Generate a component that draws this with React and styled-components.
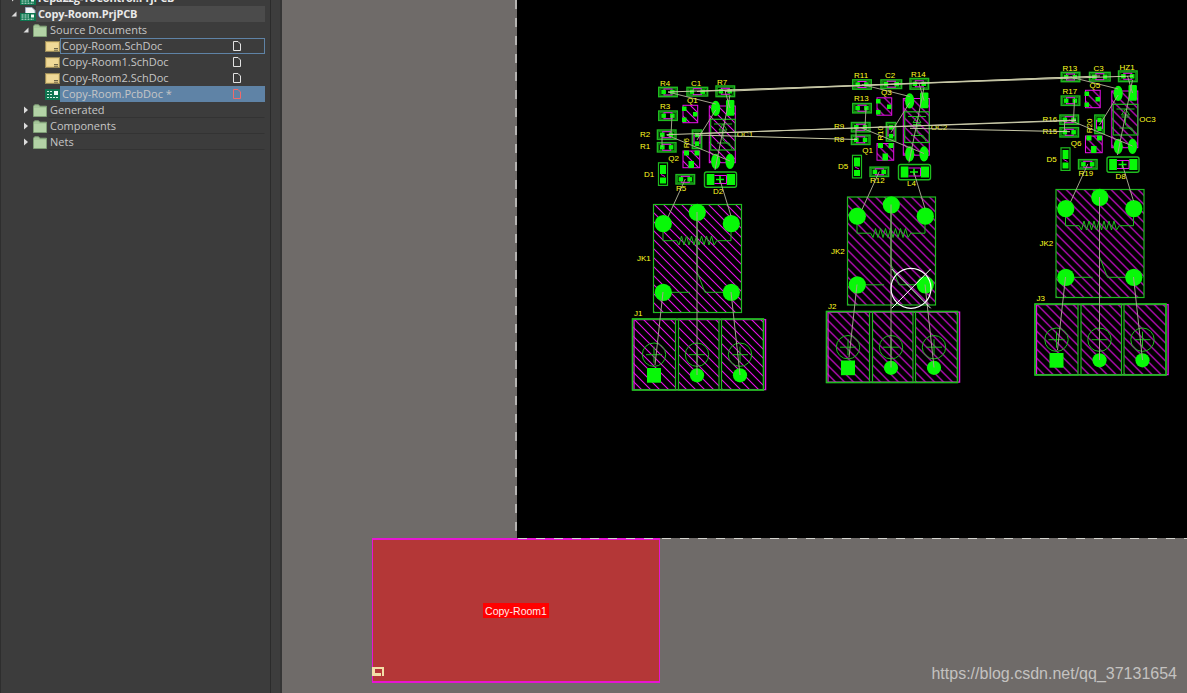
import React from "react";
import styled, { createGlobalStyle } from "styled-components";

const GREEN = "#08f808";
const SILK = "#1fbb1f";
const MAGENTA = "#e810e8";
const RATS = "#a3a38c";

const channels = [
  { id: "a", dx: 0, dy: 0, refs: ["R4", "C1", "R7", "Q1", "R3", "R2", "R1", "R6", "Q2", "D1", "R5", "D2", "OC1", "JK1", "J1"] },
  { id: "b", dx: 194, dy: -7.5, refs: ["R11", "C2", "R14", "Q3", "R13", "R9", "R8", "R10", "Q1", "D5", "R12", "L4", "OC2", "JK2", "J2"] },
  { id: "c", dx: 402.5, dy: -15, refs: ["R13", "C3", "HZ1", "Q5", "R17", "R16", "R15", "R20", "Q6", "D5", "R19", "D8", "OC3", "JK2", "J3"] },
];

const labelSlots = [
  [660, 85.7], [691, 85.7], [717, 84.7], [687, 102.7], [660, 108.7], [640, 136.7], [640, 149],
  null, [668.3, 160.7], [644, 176.7], [676, 190.7], [713, 193.7], [736.7, 137.3], [637, 261], [634, 316],
];

const localRats = [
  [668, 92, 715.7, 104], [715.7, 110, 697, 140], [725, 91, 730, 108], [730, 95, 715, 170],
  [720, 180, 731, 216], [666.7, 135, 730, 161], [672, 115, 671, 135], [662, 135, 662, 147],
  [685.3, 179, 668, 217], [663, 292, 655, 365], [697, 212, 697, 375], [731, 292, 740, 375],
];

const longRats = [
  [668, 92, 1133, 76], [725, 91.3, 1072, 77], [697, 91.5, 1100, 76], [666.7, 134.7, 1076, 120],
  [700, 133.5, 1076, 120.5], [695.7, 135, 857, 139.5], [910, 128.3, 1070, 131.7],
];

const GlobalStyle = createGlobalStyle`
  html, body {
    margin: 0;
    height: 100%;
    overflow: hidden;
    background: #6f6b69;
  }
`;

const Page = styled.div`
  width: 1187px;
  height: 693px;
  display: flex;
  overflow: hidden;
`;

const Sidebar = styled.aside`
  width: 269px;
  flex: none;
  box-sizing: content-box;
  background: #3c3c3c;
  border-left: 1px solid #2e2e2e;
  border-right: 1px solid #2b2b2b;
  padding-right: 0;
  overflow: hidden;
`;

const Gutter = styled.div`
  width: 11px;
  flex: none;
  background: #3d3d3d;
  border-right: 2px solid #353535;
  box-sizing: border-box;
`;

const Tree = styled.ul`
  list-style: none;
  margin: -10px 5px 0 -1px;
  padding: 0;
  font-family: "Open Sans", "Noto Sans", sans-serif;
  font-size: 11px;
  color: #c6c6c6;
`;

const Row = styled.li`
  height: 16px;
  display: flex;
  align-items: stretch;
  padding-left: ${(p) => p.$indent}px;
`;

const Toggle = styled.span`
  width: 12px;
  flex: none;
  display: flex;
  align-items: center;
  justify-content: center;
  color: #d8d8d8;
`;

const IconSlot = styled.span`
  width: 16px;
  flex: none;
  display: flex;
  align-items: center;
  justify-content: center;
`;

const Label = styled.span`
  flex: 1;
  min-width: 0;
  display: flex;
  align-items: center;
  justify-content: space-between;
  box-sizing: border-box;
  padding: 0 23px 0 1px;
  line-height: 14px;
  white-space: pre;
  letter-spacing: ${(p) => (p.$bold ? "-0.17px" : "0")};
  color: ${(p) => (p.$bold ? "#e9e9e9" : "#c6c6c6")};
  font-weight: ${(p) => (p.$bold ? 700 : 400)};
  background: ${(p) => (p.$tone === "selected" ? "#5f83a6" : p.$tone === "project" ? "#4b4b4b" : "transparent")};
  border: 1px solid ${(p) => (p.$tone === "focus" ? "#5f83a6" : "transparent")};
  border-bottom-color: ${(p) => (p.$tone === "folder" ? "#333333" : p.$tone === "focus" ? "#5f83a6" : "transparent")};
`;

const StatusDot = styled.span`
  width: 7px;
  height: 7px;
  margin: -8px -13px 0 0;
  border-radius: 50%;
  background: #f0666a;
`;

const Canvas = styled.main`
  position: relative;
  flex: 1;
  background: #6f6b69;
  overflow: hidden;
`;

const Board = styled.section`
  position: absolute;
  left: 235px;
  right: 0;
  top: 0;
  height: 538px;
  background: #000;
  z-index: 2;

  &::before {
    content: "";
    position: absolute;
    left: -2px;
    top: 0;
    bottom: 0;
    width: 2px;
    background: repeating-linear-gradient(180deg, #b5b3b1 0 9px, transparent 9px 18px);
  }

  &::after {
    content: "";
    position: absolute;
    left: 1px;
    right: 0;
    bottom: -1px;
    height: 1px;
    background: repeating-linear-gradient(90deg, #d2d2cd 0 9px, transparent 9px 18px);
  }
`;

const BoardArt = styled.svg`
  display: block;
  width: 100%;
  height: 100%;
`;

const Ref = styled.text`
  fill: #ffff20;
  font-family: "Liberation Sans", sans-serif;
  font-size: 8px;
`;

const Sheet = styled.div`
  position: absolute;
  left: 90px;
  top: 538px;
  width: 288px;
  height: 145px;
  box-sizing: border-box;
  background: #b43737;
  border-style: solid;
  border-color: #e615d2;
  border-width: 2px 1px;
  display: flex;
  align-items: center;
  justify-content: center;
  z-index: 1;
`;

const SheetName = styled.span`
  width: 66px;
  height: 15px;
  background: #ff0000;
  color: #ffecec;
  font-family: "Liberation Sans", sans-serif;
  font-size: 10.5px;
  line-height: 17px;
  text-align: center;
  white-space: nowrap;
`;

const OriginMark = styled.svg`
  position: absolute;
  left: -1px;
  bottom: 5px;
`;

const Watermark = styled.div`
  position: absolute;
  right: 10px;
  bottom: 10px;
  font-family: "Liberation Sans", sans-serif;
  font-size: 16px;
  line-height: 18px;
  color: #c4c2c0;
  z-index: 3;
`;

const Arrow = ({ open }) =>
  open ? (
    <svg width="6" height="6" viewBox="0 0 6 6">
      <path d="M5.5 .5V5.5H.5z" fill="#dcdcdc" />
    </svg>
  ) : (
    <svg width="6" height="8" viewBox="0 0 6 8">
      <path d="M1 .5L5 4 1 7.5z" fill="#dcdcdc" />
    </svg>
  );

const FolderIcon = () => (
  <svg width="14" height="13" viewBox="0 0 14 13">
    <path d="M.5 12.5V2.2L1.6 .8H5.6L6.8 2.2H13.5V12.5z" fill="#a6c79a" stroke="#7f9f76" />
    <path d="M1 4H13V12H1z" fill="#b3d3a6" />
  </svg>
);

const SchIcon = () => (
  <svg width="15" height="11" viewBox="0 0 15 11">
    <rect x=".5" y=".5" width="14" height="10" fill="#e6cc84" stroke="#9a8a58" />
    <rect x="2" y="2" width="11" height="7" fill="#efd998" />
    <path d="M9 7.5H13M9 9.2H13" stroke="#6d6547" />
  </svg>
);

const PcbIcon = () => (
  <svg width="15" height="11" viewBox="0 0 15 11">
    <rect width="15" height="11" fill="#0e7550" />
    <rect x="9" y="2" width="4" height="4" fill="#f2fbf6" />
    <path d="M2 2.5H7M2 5.5H7M2 8.5H13" stroke="#d3f0e2" strokeDasharray="2 1" />
  </svg>
);

const ProjectIcon = () => (
  <svg width="16" height="15" viewBox="0 0 16 15">
    <path d="M5.5 .5H12L15 3.5V10H5.5z" fill="#f2f4f6" stroke="#9fb0c4" />
    <rect y="6" width="16" height="8" fill="#0e7550" />
    <rect x="11" y="7.5" width="3" height="3" fill="#f2fbf6" />
    <path d="M1.5 8H9M1.5 10H9M1.5 12.2H14" stroke="#d3f0e2" strokeDasharray="2 1" />
  </svg>
);

const DocIcon = ({ modified }) => (
  <svg width="8" height="10" viewBox="0 0 8 10">
    <path d="M.5 .5H5L7.5 3V9.5H.5z" fill="none" stroke={modified ? "#ef6a6a" : "#e2e2e2"} />
  </svg>
);

const Resistor = ({ x, y, w = 18.6, h = 9.4, vertical }) => (
  <g transform={`translate(${x} ${y})${vertical ? " rotate(90)" : ""}`}>
    <rect x={-w / 2} y={-h / 2} width={w} height={h} fill="#063f06" stroke={SILK} strokeWidth="1.4" />
    <rect x={-w / 2 + 1.4} y={-h / 2 + 1.4} width={w - 2.8} height={h - 2.8} fill="#000" stroke="#149414" />
    <rect x={-4} y={-3} width={8} height={6} fill="none" stroke={MAGENTA} />
    <rect x={-w / 2 + 2.6} y={-2.2} width={4.6} height={4.4} fill={GREEN} />
    <rect x={w / 2 - 7.2} y={-2.2} width={4.6} height={4.4} fill={GREEN} />
  </g>
);

const Hatched = ({ x, y, w, h, stroke = SILK, strokeWidth = 1.2 }) => (
  <rect x={x} y={y} width={w} height={h} fill="url(#hatch)" stroke={stroke} strokeWidth={strokeWidth} />
);

const Relay = () => (
  <g>
    <Hatched x={653.5} y={204.5} w={88} h={108} />
    <path
      d="M663 224V240.7H676.7L679 245 681.5 236 684 245 686.5 236 689 245 691.5 236 694 245 696.5 236 699 245 701.5 236 704 245 706.5 236 709 245 711.5 236 714 245 716.7 240.7H731V224"
      fill="none"
      stroke={SILK}
    />
    <path d="M697 212V271.7L705 292.3H731M663 292.3H690" fill="none" stroke={SILK} />
    {[[663.3, 223.7], [697.3, 212.3], [731.3, 223.7], [663.3, 292.3], [731.3, 292.3]].map(([cx, cy]) => (
      <circle key={`${cx}-${cy}`} cx={cx} cy={cy} r="8.6" fill={GREEN} />
    ))}
  </g>
);

const Connector = () => (
  <g>
    <rect x={634} y={319.6} width={131.6} height={70} fill="none" stroke={MAGENTA} strokeWidth="1.3" />
    <Hatched x={632.5} y={319} w={43} h={71} />
    <Hatched x={678.5} y={319} w={40.5} h={71} />
    <Hatched x={721.5} y={319} w={42} h={71} />
    <rect x={632.5} y={319} width={131} height={71} fill="none" stroke={SILK} strokeWidth="1.5" />
    {[654, 697, 740].map((cx) => (
      <g key={cx} fill="none" stroke={SILK}>
        <circle cx={cx} cy={354.7} r={11.7} />
        <path d={`M${cx - 8} 354.7H${cx + 8}M${cx} 346.7V362.7`} />
      </g>
    ))}
    <rect x={647} y={368} width={14} height={14.7} fill={GREEN} />
    <circle cx={697} cy={375.3} r={7.1} fill={GREEN} />
    <circle cx={740} cy={375.3} r={7.1} fill={GREEN} />
  </g>
);

const Transistor = ({ x, y, w, h, pads }) => (
  <g>
    <rect x={x} y={y} width={w} height={h} fill="url(#hatch)" stroke={MAGENTA} />
    {pads.map(([px, py, pw, ph]) => (
      <rect key={`${px}-${py}`} x={px} y={py} width={pw} height={ph} fill={GREEN} />
    ))}
  </g>
);

const Optocoupler = () => (
  <g>
    <rect x={709.3} y={106} width={26} height={56.7} fill="url(#hatch)" stroke={MAGENTA} />
    <rect x={710.7} y={119.3} width={24.6} height={30.7} fill="none" stroke={SILK} strokeWidth="1.2" />
    <path d="M714 124H732M723 124L719 130H727zM719 132H727M723 130V140M717 143H729L732 149M723 140L730 146" fill="none" stroke={SILK} />
    <ellipse cx={715.7} cy={108.3} rx={4.6} ry={7.6} fill={GREEN} />
    <rect x={726} y={100} width={8.4} height={15.7} rx={1} fill={GREEN} />
    <ellipse cx={715.7} cy={161.3} rx={4.6} ry={7.6} fill={GREEN} />
    <ellipse cx={730} cy={161.3} rx={4.6} ry={7.6} fill={GREEN} />
  </g>
);

const Diodes = () => (
  <g>
    <rect x={658.5} y={162.8} width={9} height={22.6} fill="#000" stroke={SILK} strokeWidth="1.2" />
    <rect x={660} y={165} width={6} height={9} fill={GREEN} />
    <rect x={660} y={177.5} width={6} height={6} fill={GREEN} />
    <path d="M661 174.5L665 176.5" stroke={MAGENTA} />
    <rect x={704.5} y={172} width={32} height={15.3} rx={2} fill="#000" stroke={SILK} strokeWidth="1.4" />
    <rect x={706.7} y={174} width={7.7} height={11} fill={GREEN} />
    <rect x={726.7} y={174} width={8.3} height={11} fill={GREEN} />
    <path d="M714.5 175.5H726.5V183.5H714.5" fill="none" stroke={MAGENTA} />
    <path d="M720 176V183M716 179.5H724" stroke={GREEN} strokeWidth="1.6" />
  </g>
);

const Channel = ({ dx, dy, refs }) => (
  <g transform={`translate(${dx} ${dy})`}>
    <Relay />
    <Connector />
    <Optocoupler />
    <Diodes />
    <Resistor x={668} y={92} />
    <Resistor x={697.3} y={91.7} w={20.7} h={8.7} />
    <Resistor x={725.3} y={91.3} h={10.7} />
    <Resistor x={668} y={115.7} />
    <Resistor x={666.7} y={134.7} />
    <Resistor x={666.7} y={147.3} />
    <Resistor x={697} y={139.3} vertical />
    <Resistor x={685.3} y={179.3} />
    <Transistor x={683} y={105.3} w={14.7} h={17.4} pads={[[682, 106.5, 4.5, 4.5], [682, 117.5, 4.5, 4.5], [693, 112, 4.5, 4.5]]} />
    <Transistor x={683} y={151} w={16.7} h={16.7} pads={[[684, 150.5, 5, 5], [694.5, 150.5, 5, 5], [688.5, 161, 5.5, 7]]} />
    {localRats.map(([x1, y1, x2, y2]) => (
      <line key={`${x1}-${y1}-${x2}`} x1={x1} y1={y1} x2={x2} y2={y2} stroke={RATS} />
    ))}
    {labelSlots.map((slot, i) =>
      slot ? (
        <Ref key={refs[i] + i} x={slot[0]} y={slot[1]}>
          {refs[i]}
        </Ref>
      ) : (
        <Ref key={refs[i] + i} transform="translate(689.3 148.3) rotate(-90)">
          {refs[i]}
        </Ref>
      )
    )}
  </g>
);

const PcbArtwork = () => (
  <BoardArt viewBox="517 0 670 538">
    <defs>
      <pattern id="hatch" patternUnits="userSpaceOnUse" width="9" height="9">
        <path d="M-1 -1L10 10M-1 8L1 10M8 -1L10 1" stroke={MAGENTA} strokeWidth="1.1" />
      </pattern>
    </defs>
    {channels.map((c) => (
      <Channel key={c.id} dx={c.dx} dy={c.dy} refs={c.refs} />
    ))}
    {longRats.map(([x1, y1, x2, y2]) => (
      <line key={`${x1}-${y1}`} x1={x1} y1={y1} x2={x2} y2={y2} stroke="#c9c9a8" strokeWidth="1" />
    ))}
    <g fill="none" stroke="#fff">
      <circle cx={911} cy={288.3} r={20} strokeWidth="1.2" />
      <path d="M891.7 269L930.7 308.3M930.7 269L891.7 308.3" />
    </g>
  </BoardArt>
);

const docs = [
  { name: "Copy-Room.SchDoc", icon: <SchIcon />, tone: "focus" },
  { name: "Copy-Room1.SchDoc", icon: <SchIcon /> },
  { name: "Copy-Room2.SchDoc", icon: <SchIcon /> },
  { name: "Copy-Room.PcbDoc *", icon: <PcbIcon />, tone: "selected", modified: true },
];

export default function App() {
  return (
    <Page>
      <GlobalStyle />
      <Sidebar>
        <Tree>
          <Row $indent={8}>
            <Toggle>
              <Arrow />
            </Toggle>
            <IconSlot>
              <ProjectIcon />
            </IconSlot>
            <Label $bold>
              repa2zg-ToControl.PrjPCB
              <StatusDot />
            </Label>
          </Row>
          <Row $indent={8}>
            <Toggle>
              <Arrow open />
            </Toggle>
            <IconSlot>
              <ProjectIcon />
            </IconSlot>
            <Label $bold $tone="project">
              Copy-Room.PrjPCB
            </Label>
          </Row>
          <Row $indent={20}>
            <Toggle>
              <Arrow open />
            </Toggle>
            <IconSlot>
              <FolderIcon />
            </IconSlot>
            <Label>Source Documents</Label>
          </Row>
          {docs.map((d) => (
            <Row key={d.name} $indent={32}>
              <Toggle />
              <IconSlot>{d.icon}</IconSlot>
              <Label $tone={d.tone}>
                {d.name}
                <DocIcon modified={d.modified} />
              </Label>
            </Row>
          ))}
          {["Generated", "Components", "Nets"].map((name) => (
            <Row key={name} $indent={20}>
              <Toggle>
                <Arrow />
              </Toggle>
              <IconSlot>
                <FolderIcon />
              </IconSlot>
              <Label $tone="folder">{name}</Label>
            </Row>
          ))}
        </Tree>
      </Sidebar>
      <Gutter />
      <Canvas>
        <Board>
          <PcbArtwork />
        </Board>
        <Sheet>
          <SheetName>Copy-Room1</SheetName>
          <OriginMark width="12" height="9" viewBox="0 0 12 9">
            <path d="M0 0H12V9H10V2H3V6H9V9H0z" fill="#f2dfa8" />
          </OriginMark>
        </Sheet>
        <Watermark>https://blog.csdn.net/qq_37131654</Watermark>
      </Canvas>
    </Page>
  );
}
